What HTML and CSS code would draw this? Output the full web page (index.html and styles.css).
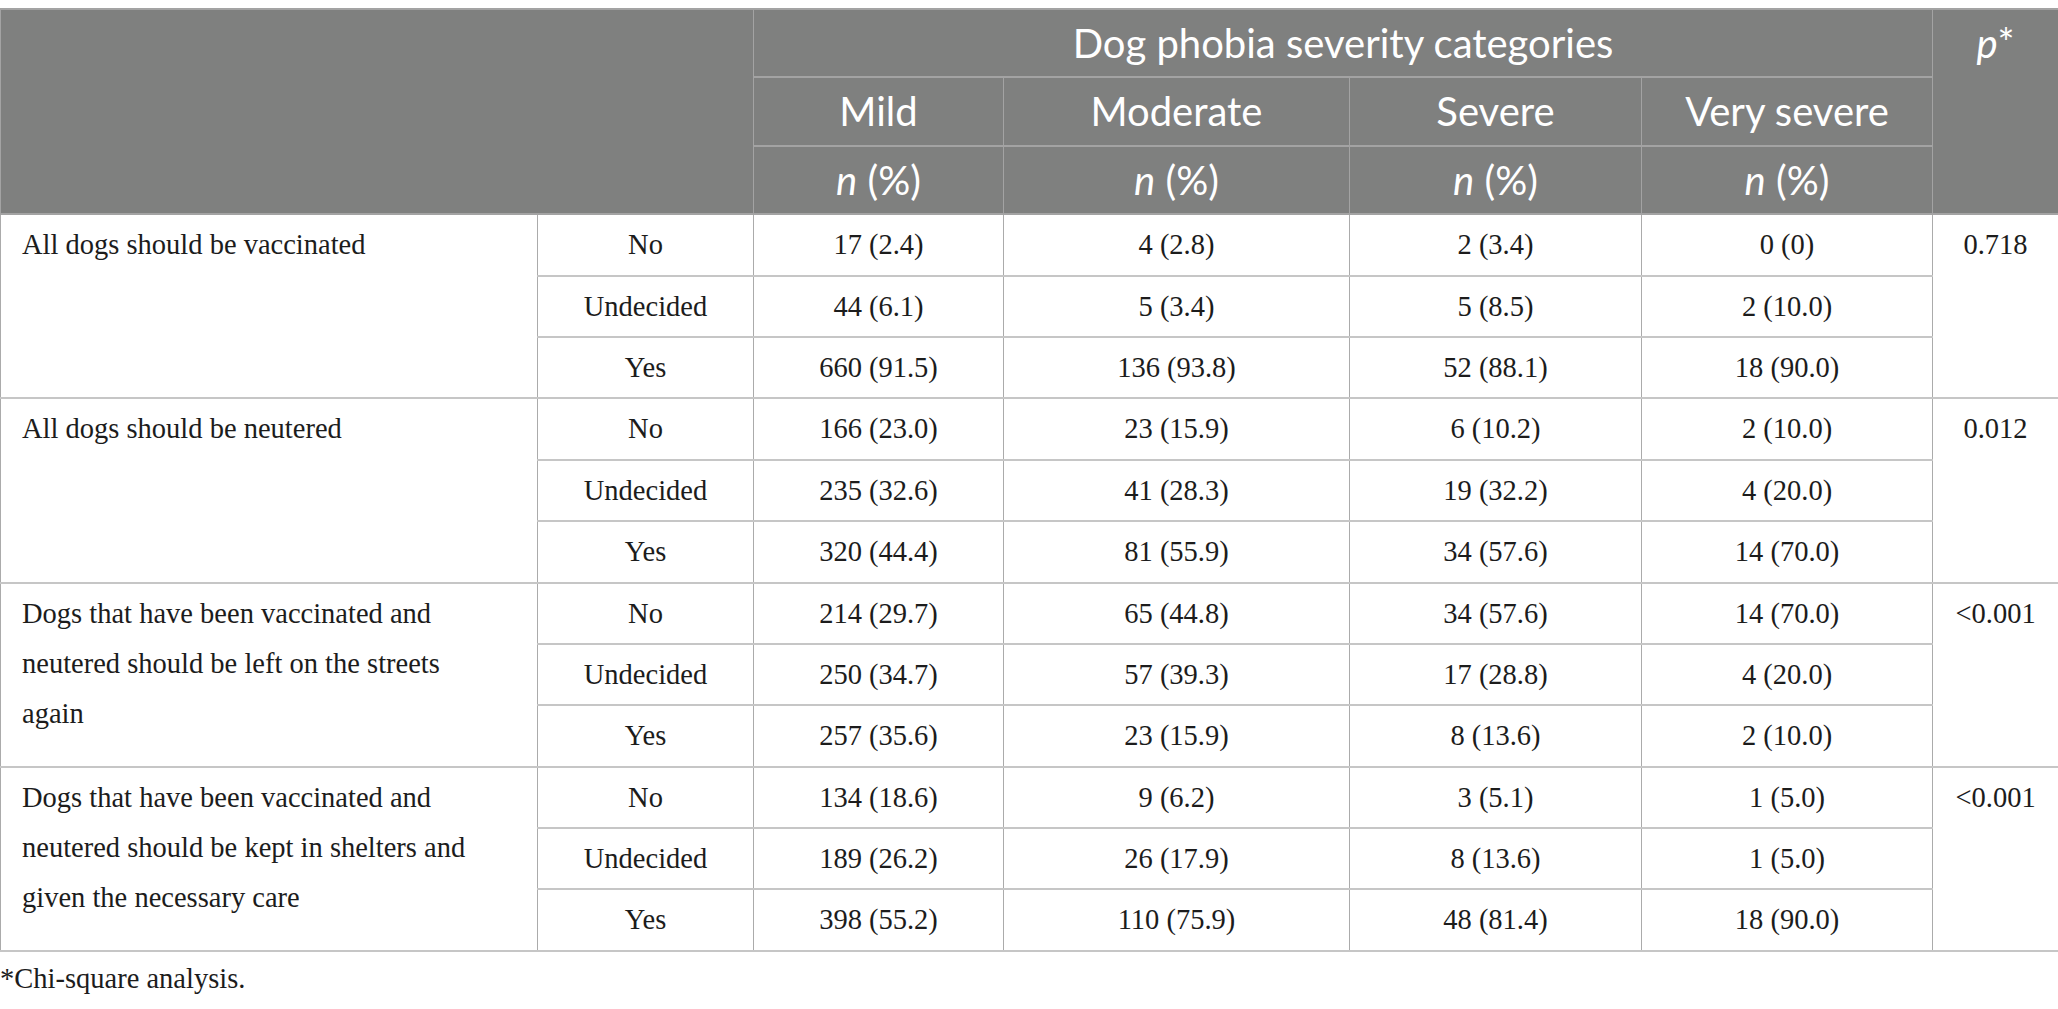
FILE: index.html
```html
<!DOCTYPE html>
<html lang="en">
<head>
<meta charset="utf-8">
<title>Dog phobia severity categories</title>
<link rel="stylesheet" href="styles.css">
</head>
<body>
<div class="wrap">
<table class="data">
  <colgroup>
    <col class="c-label">
    <col class="c-resp">
    <col class="c-mild">
    <col class="c-mod">
    <col class="c-sev">
    <col class="c-vsev">
    <col class="c-p">
  </colgroup>
  <thead>
    <tr>
      <th colspan="2" rowspan="3" class="blank"></th>
      <th colspan="4">Dog phobia severity categories</th>
      <th rowspan="3" class="pcol"><i>p</i>*</th>
    </tr>
    <tr>
      <th>Mild</th>
      <th>Moderate</th>
      <th>Severe</th>
      <th>Very severe</th>
    </tr>
    <tr>
      <th><i>n</i> (%)</th>
      <th><i>n</i> (%)</th>
      <th><i>n</i> (%)</th>
      <th><i>n</i> (%)</th>
    </tr>
  </thead>
  <tbody>
    <tr>
      <td rowspan="3" class="label">All dogs should be vaccinated</td>
      <td>No</td><td>17 (2.4)</td><td>4 (2.8)</td><td>2 (3.4)</td><td>0 (0)</td>
      <td rowspan="3" class="pval">0.718</td>
    </tr>
    <tr><td>Undecided</td><td>44 (6.1)</td><td>5 (3.4)</td><td>5 (8.5)</td><td>2 (10.0)</td></tr>
    <tr><td>Yes</td><td>660 (91.5)</td><td>136 (93.8)</td><td>52 (88.1)</td><td>18 (90.0)</td></tr>

    <tr>
      <td rowspan="3" class="label">All dogs should be neutered</td>
      <td>No</td><td>166 (23.0)</td><td>23 (15.9)</td><td>6 (10.2)</td><td>2 (10.0)</td>
      <td rowspan="3" class="pval">0.012</td>
    </tr>
    <tr><td>Undecided</td><td>235 (32.6)</td><td>41 (28.3)</td><td>19 (32.2)</td><td>4 (20.0)</td></tr>
    <tr><td>Yes</td><td>320 (44.4)</td><td>81 (55.9)</td><td>34 (57.6)</td><td>14 (70.0)</td></tr>

    <tr>
      <td rowspan="3" class="label">Dogs that have been vaccinated and neutered should be left on the streets again</td>
      <td>No</td><td>214 (29.7)</td><td>65 (44.8)</td><td>34 (57.6)</td><td>14 (70.0)</td>
      <td rowspan="3" class="pval">&lt;0.001</td>
    </tr>
    <tr><td>Undecided</td><td>250 (34.7)</td><td>57 (39.3)</td><td>17 (28.8)</td><td>4 (20.0)</td></tr>
    <tr><td>Yes</td><td>257 (35.6)</td><td>23 (15.9)</td><td>8 (13.6)</td><td>2 (10.0)</td></tr>

    <tr>
      <td rowspan="3" class="label">Dogs that have been vaccinated and neutered should be kept in shelters and given the necessary care</td>
      <td>No</td><td>134 (18.6)</td><td>9 (6.2)</td><td>3 (5.1)</td><td>1 (5.0)</td>
      <td rowspan="3" class="pval">&lt;0.001</td>
    </tr>
    <tr><td>Undecided</td><td>189 (26.2)</td><td>26 (17.9)</td><td>8 (13.6)</td><td>1 (5.0)</td></tr>
    <tr><td>Yes</td><td>398 (55.2)</td><td>110 (75.9)</td><td>48 (81.4)</td><td>18 (90.0)</td></tr>
  </tbody>
</table>
<p class="footnote">*Chi-square analysis.</p>
</div>
</body>
</html>
```

FILE: styles.css
```css
html, body {
  margin: 0;
  padding: 0;
  background: #ffffff;
}

.wrap {
  padding-top: 8px;
}

.data {
  width: 100%;
  border-collapse: collapse;
  table-layout: fixed;
  font-family: "Liberation Serif", "Times New Roman", serif;
  font-size: 28.5px;
  color: #1c1c1c;
  border-top: 2px solid #c9c9c9;
}

.c-label { width: 537px; }
.c-resp { width: 216px; }
.c-mild { width: 250px; }
.c-mod { width: 346px; }
.c-sev { width: 292px; }
.c-vsev { width: 291px; }
.c-p { width: 126px; }

.data th {
  background: #7f807f;
  color: #ffffff;
  font-family: "Source Sans Pro", Lato, "Open Sans", sans-serif;
  font-weight: 400;
  font-size: 40px;
  line-height: 50px;
  padding: 8px 6px 8.4px;
  text-align: center;
  vertical-align: middle;
  border-top: 2px solid #a3a3a3;
  border-bottom: 2px solid #a3a3a3;
  border-left: 1px solid #a3a3a3;
  border-right: 1px solid #a3a3a3;
}

.data th.pcol {
  vertical-align: top;
}

.data th i {
  font-style: italic;
}

.data td {
  line-height: 50px;
  padding: 5px 8px 4.4px;
  text-align: center;
  vertical-align: middle;
  border-top: 2px solid #c6c6c6;
  border-bottom: 2px solid #c6c6c6;
  border-left: 1px solid #ababab;
  border-right: 1px solid #ababab;
}

.data td.label {
  text-align: left;
  vertical-align: top;
  padding-left: 21px;
  padding-right: 30px;
}

.data td.pval {
  vertical-align: top;
}

.footnote {
  margin: 2px 0 0;
  font-family: "Liberation Serif", "Times New Roman", serif;
  font-size: 28.5px;
  line-height: 50px;
  color: #1c1c1c;
}
```
